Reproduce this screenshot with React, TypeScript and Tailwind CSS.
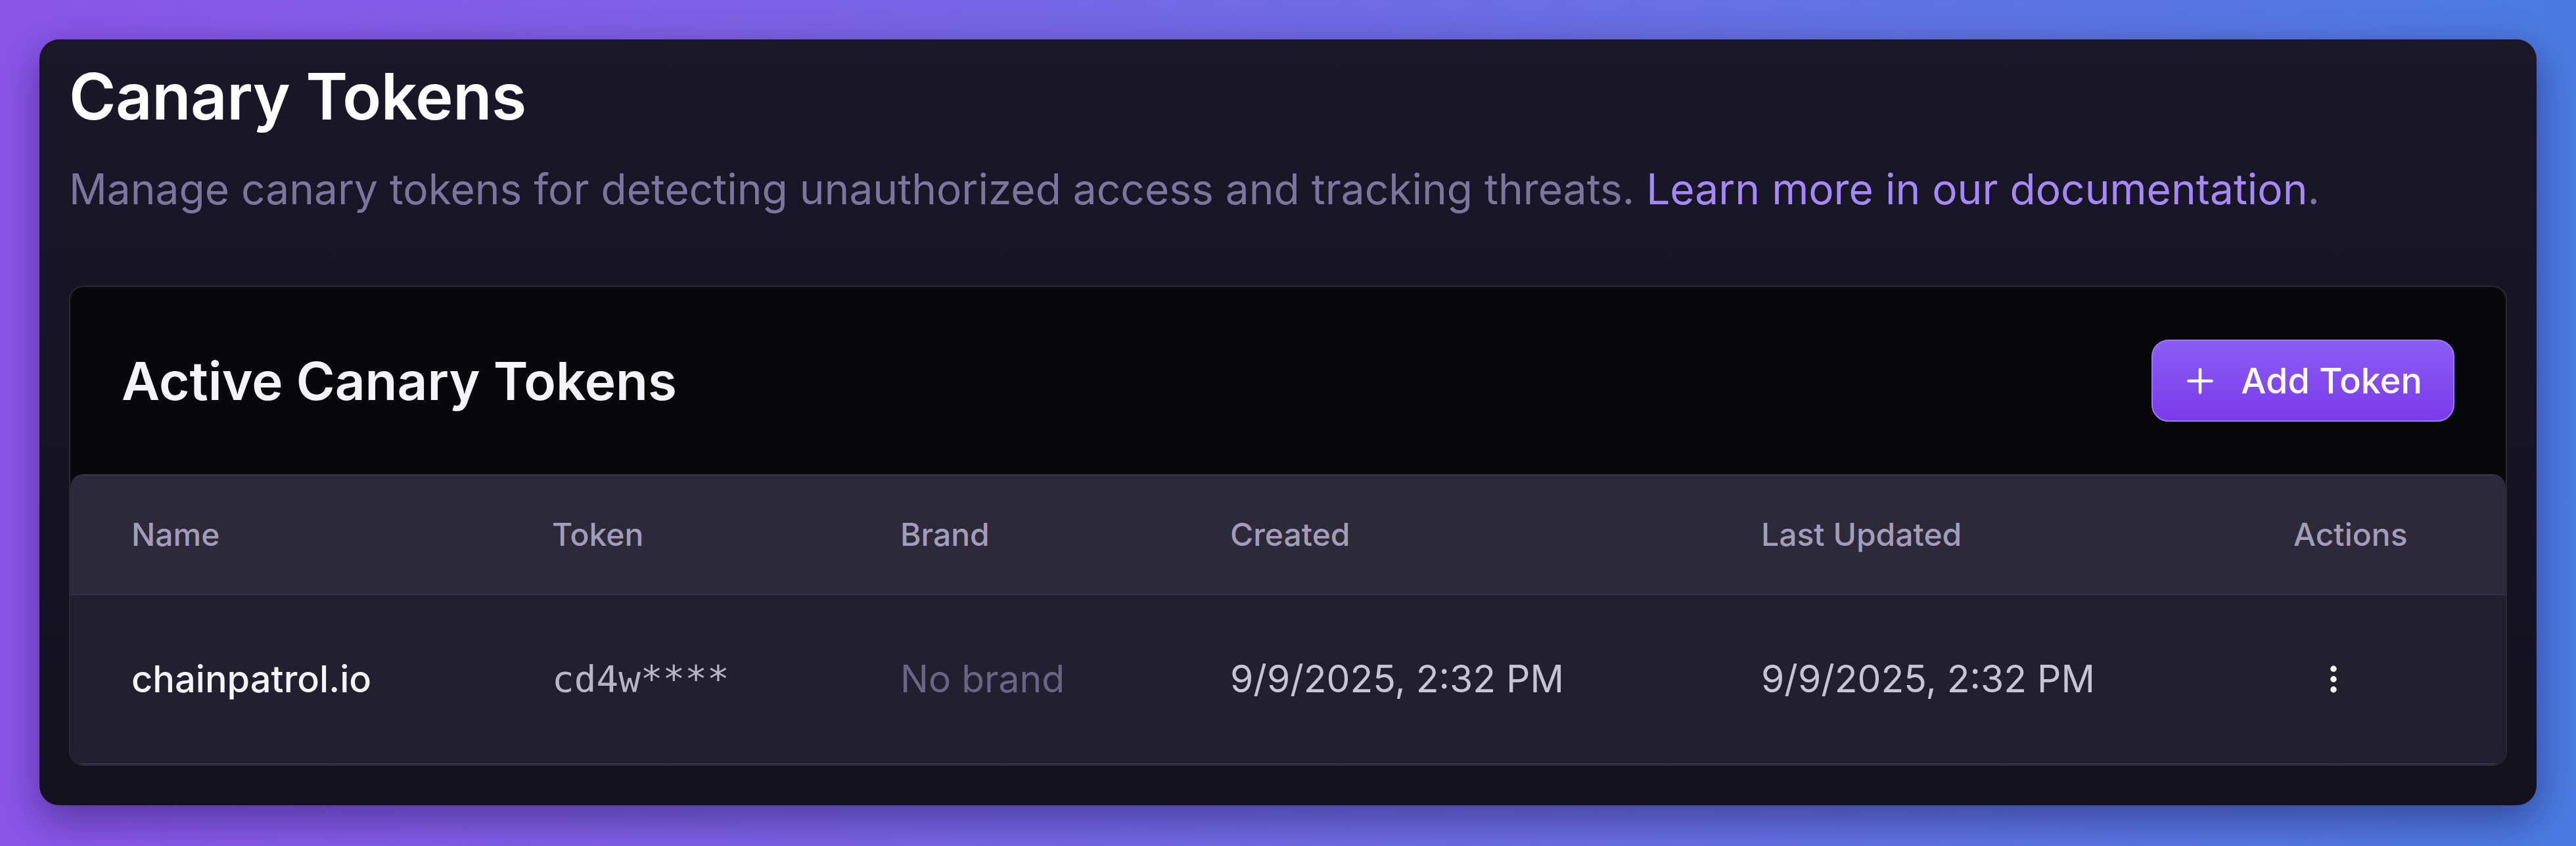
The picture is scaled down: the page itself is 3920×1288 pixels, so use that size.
import { Plus, EllipsisVertical } from "lucide-react"

const tokens = [
    {
        name: "chainpatrol.io",
        token: "cd4w****",
        brand: null as string | null,
        created: "9/9/2025, 2:32 PM",
        updated: "9/9/2025, 2:32 PM",
    },
]

export default function App() {
    return (
        <div
            className="min-h-[1288px] w-full bg-gradient-to-r from-[#8b55e8] to-[#4a7be2] p-[60px]"
            style={{ fontFamily: "Inter, 'Noto Sans', sans-serif" }}
        >
            <div className="rounded-[30px] bg-gradient-to-b from-[#1a1828] to-[#13111e] px-[45px] pt-[38px] pb-[60px] shadow-[0_20px_60px_rgba(20,10,60,0.45)]">
                {/* Page heading */}
                <h1 className="text-[97px] font-semibold leading-none text-white tracking-[-0.5px]">Canary Tokens</h1>
                <p className="mt-[45px] text-[64px] leading-[1.5] text-[#7d75a0]">
                    Manage canary tokens for detecting unauthorized access and tracking threats.{" "}
                    <a className="text-[#a788fa]">Learn more in our documentation</a>.
                </p>

                {/* Tokens card */}
                <div className="mt-[99px] overflow-hidden rounded-[22px] border-2 border-[#2a2930] bg-[#08080a]">
                    <div className="flex items-center justify-between pl-[78px] pr-[78px] pt-[80px] pb-[80px]">
                        <h2 className="text-[80px] font-semibold text-[#f4f4f6] leading-none">Active Canary Tokens</h2>
                        <button className="flex h-[125px] items-center gap-[32px] rounded-[26px] border-2 border-[#9d7af5] bg-gradient-to-b from-[#8d5cf6] to-[#7a3ae9] pl-[42px] pr-[47px] text-[54px] font-medium text-white shadow-[0_4px_10px_rgba(0,0,0,0.35)]">
                            <Plus size={60} strokeWidth={1.8} />
                            Add Token
                        </button>
                    </div>

                    {/* Table */}
                    <div className="overflow-hidden rounded-t-[20px] border-t-2 border-[#3a3650]">
                        <div className="grid h-[180px] grid-cols-[640px_530px_502px_808px_1fr_173px] items-center bg-[#2c2939] pl-[93px] pr-[150px] text-[48px] font-medium text-[#a39dba]">
                            <div>Name</div>
                            <div>Token</div>
                            <div>Brand</div>
                            <div>Created</div>
                            <div>Last Updated</div>
                            <div>Actions</div>
                        </div>
                        {tokens.map((t) => (
                            <div
                                key={t.name}
                                className="grid h-[260px] grid-cols-[640px_530px_502px_808px_1fr_173px] items-center border-t-2 border-b-2 border-[#37334a] bg-[#221f2e] pl-[93px] pr-[150px] text-[57px]"
                            >
                                <div className="text-[56px] font-medium text-[#f5f5f7]">{t.name}</div>
                                <div
                                    className="text-[56px] text-[#b9b5c9]"
                                    style={{ fontFamily: "'DejaVu Sans Mono', monospace" }}
                                >
                                    {t.token}
                                </div>
                                <div className="text-[#6b6486]">{t.brand ?? "No brand"}</div>
                                <div className="text-[#c8c3d6]">{t.created}</div>
                                <div className="text-[#c8c3d6]">{t.updated}</div>
                                <div className="pl-[34px]">
                                    <EllipsisVertical size={54} strokeWidth={2.2} className="text-white" />
                                </div>
                            </div>
                        ))}
                    </div>
                </div>
            </div>
        </div>
    )
}
